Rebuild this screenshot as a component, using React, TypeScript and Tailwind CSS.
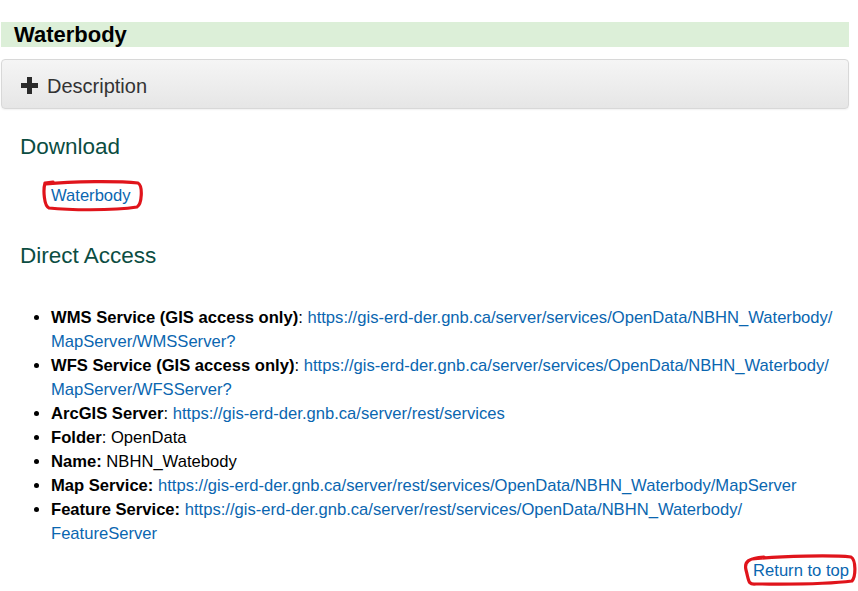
const linkCls = 'text-[#0a66b0] hover:underline';

const items: { label: string; sep: string; value: string; url?: boolean; brk?: string }[] = [
  {
    label: 'WMS Service (GIS access only)',
    sep: ': ',
    value: 'https://gis-erd-der.gnb.ca/server/services/OpenData/NBHN_Waterbody/',
    brk: 'MapServer/WMSServer?',
    url: true,
  },
  {
    label: 'WFS Service (GIS access only)',
    sep: ': ',
    value: 'https://gis-erd-der.gnb.ca/server/services/OpenData/NBHN_Waterbody/',
    brk: 'MapServer/WFSServer?',
    url: true,
  },
  { label: 'ArcGIS Server', sep: ': ', value: 'https://gis-erd-der.gnb.ca/server/rest/services', url: true },
  { label: 'Folder', sep: ': ', value: 'OpenData' },
  { label: 'Name:', sep: ' ', value: 'NBHN_Watebody' },
  {
    label: 'Map Service:',
    sep: ' ',
    value: 'https://gis-erd-der.gnb.ca/server/rest/services/OpenData/NBHN_Waterbody/MapServer',
    url: true,
  },
  {
    label: 'Feature Service:',
    sep: ' ',
    value: 'https://gis-erd-der.gnb.ca/server/rest/services/OpenData/NBHN_Waterbody/',
    brk: 'FeatureServer',
    url: true,
  },
];

function Scribble({ d, w, h, className }: { d: string; w: number; h: number; className: string }) {
  return (
    <svg
      className={`absolute pointer-events-none ${className}`}
      width={w}
      height={h}
      viewBox={`0 0 ${w} ${h}`}
      fill="none"
    >
      <path d={d} stroke="#e0141b" strokeWidth="3.2" strokeLinecap="round" strokeLinejoin="round" />
    </svg>
  );
}

export default function App() {
  return (
    <div className="bg-white min-h-[591px] pt-[22px] text-[#111] font-['Liberation_Sans',Arial,sans-serif]">
      <div className="ml-[1px] w-[848px]">
        {/* Title bar */}
        <h2 className="bg-[#dcefd8] h-[25px] pl-[13px] text-[22px] leading-[25px] font-bold text-black">
          Waterbody
        </h2>

        {/* Collapsible panel */}
        <div className="mt-[12px] h-[50px] rounded-[4px] border border-[#d8d8d8] bg-gradient-to-b from-[#f5f5f5] to-[#e6e6e6] shadow-[0_1px_2px_rgba(0,0,0,0.06)] flex items-center pl-[18px] gap-[8px]">
          <svg width="19" height="19" viewBox="0 0 19 19" className="mt-[2px]">
            <path d="M7 1h5v6h6v5h-6v6H7v-6H1V7h6z" fill="#2b2b2b" />
          </svg>
          <span className="text-[20px] text-[#333] mt-[3px]">Description</span>
        </div>

        {/* Download */}
        <h3 className="mt-[25px] pl-[19px] text-[22.5px] leading-[26px] text-[#0b4d42]">Download</h3>
        <div className="mt-[24px] pl-[50px] text-[16.6px] leading-[24px]">
          <span className="relative inline-block">
            <a href="#" className={linkCls}>Waterbody</a>
            <Scribble
              w={102}
              h={32}
              className="left-[-9px] top-[-4px]"
              d="M4 4 C 30 1, 78 1, 96 3 C 101 6, 100 24, 95 27 C 70 31, 25 30, 7 28 C 2 26, 1 10, 3 3 L 11 2"
            />
          </span>
        </div>

        {/* Direct Access */}
        <h3 className="mt-[35px] pl-[19px] text-[22.5px] leading-[26px] text-[#0b4d42]">Direct Access</h3>
        <ul className="mt-[37px] pl-[50px] pr-[4px] list-disc text-[16.6px] leading-[24px] text-black">
          {items.map((it) => (
            <li key={it.label} className="marker:text-black">
              <b>{it.label}</b>
              {it.sep}
              {it.url ? (
                <a href="#" className={linkCls}>
                  {it.value}
                  {it.brk && (
                    <>
                      <wbr />
                      {it.brk}
                    </>
                  )}
                </a>
              ) : (
                it.value
              )}
            </li>
          ))}
        </ul>

        {/* Return to top */}
        <div className="mt-[13px] flex justify-end text-[16.6px] leading-[24px]">
          <span className="relative inline-block">
            <a href="#" className={linkCls}>Return to top</a>
            <Scribble
              w={116}
              h={34}
              className="left-[-11px] top-[-5px]"
              d="M10 5 C 40 2, 90 1, 109 3 C 114 6, 114 22, 110 27 C 80 31, 40 30, 14 30 C 6 31, 7 27, 4 16 C 2 8, 6 4, 22 3"
            />
          </span>
        </div>
      </div>
    </div>
  );
}
